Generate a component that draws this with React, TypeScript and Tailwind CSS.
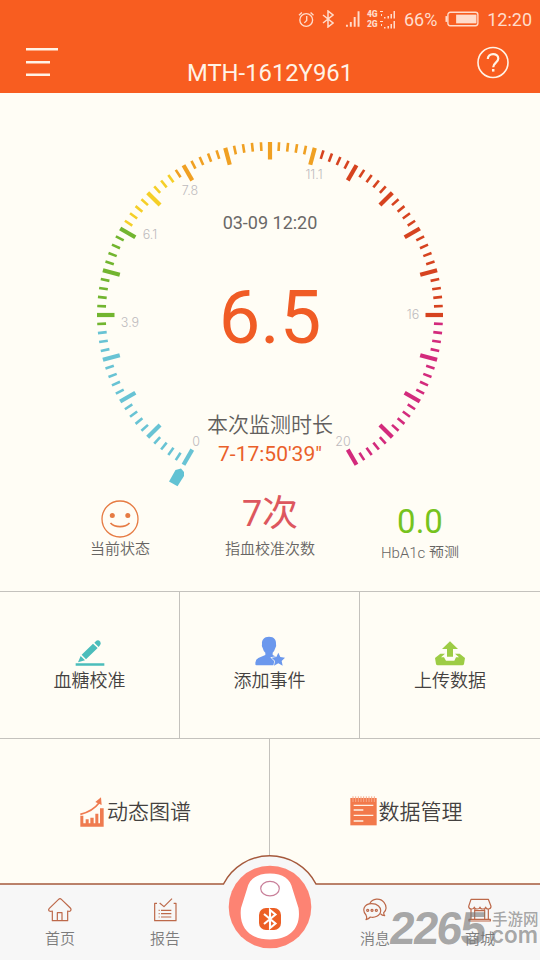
import type { ReactNode } from 'react';

const CX = 270;
const CY = 222;
const R = 173;

const SCALE_LABELS = [
  { text: '0', x: 196, y: 353 },
  { text: '3.9', x: 130, y: 234 },
  { text: '6.1', x: 150, y: 146 },
  { text: '7.8', x: 190, y: 102 },
  { text: '11.1', x: 314, y: 86 },
  { text: '16', x: 413, y: 226 },
  { text: '20', x: 343, y: 353 },
];

const tickColor = (i: number) => {
  if (i <= 18) return '#68c3d4';
  if (i <= 30) return '#72b52f';
  if (i <= 38) return '#f5cf27';
  if (i <= 55) return '#f0a022';
  if (i <= 80) return '#d6431f';
  return '#d32a7c';
};

const ticks = Array.from({ length: 101 }, (_, i) => i);

const GaugeDial = () => (
  <svg className="absolute inset-0" width="540" height="400" viewBox="0 0 540 400">
    {ticks.map(i => {
      const major = i % 5 === 0;
      return (
        <line
          key={i}
          x1={CX}
          x2={CX}
          y1={CY - R}
          y2={CY - R + (major ? 17.5 : 8.8)}
          stroke={tickColor(i)}
          strokeWidth={major ? 4.2 : 2.6}
          transform={`rotate(${210 + i * 3} ${CX} ${CY})`}
        />
      );
    })}
    {/* pointer */}
    <path d="M175.500 377L181 375.500L184 379V383L177.500 393.200L169 388.500Z" fill="#62c2d3" />
    {SCALE_LABELS.map(l => (
      <text
        key={l.text}
        x={l.x}
        y={l.y}
        textAnchor="middle"
        fontSize="12.5"
        fill="#bdbabd"
        fontFamily="Inter, Roboto, sans-serif"
        fontWeight="300"
      >
        {l.text}
      </text>
    ))}
  </svg>
);

const BluetoothGlyph = ({ width, height, stroke }: { width: number; height: number; stroke: number }) => (
  <svg width={width} height={height} viewBox="0 0 12 18" fill="none" stroke="currentColor" strokeWidth={stroke}>
    <path d="M1 5L11 13L6 17V1L11 5L1 13" />
  </svg>
);

const StatusBar = () => (
  <div className="flex h-10 items-center pl-[298px] pr-2 text-[#ffdccb]">
    <svg className="-mt-[2px]" width="17" height="17" viewBox="0 0 17 17" fill="none" stroke="currentColor" strokeWidth="1.4">
      <circle cx="8.5" cy="9" r="6.6" />
      <path d="M1 4L4 1.3M16 4L13 1.3M9 5V9.5L6.5 12" />
    </svg>
    <span className="ml-2 -mt-[3px]">
      <BluetoothGlyph width={12} height={18} stroke={1.5} />
    </span>
    <svg className="ml-[11px] -mt-[3px]" width="16" height="18" viewBox="0 0 16 18" fill="currentColor">
      <path d="M1 15h2v2h-2zM5 12h2v5h-2zM9 7h2v10h-2zM13 1h2v16h-2z" />
    </svg>
    <div className="ml-[6px] -mt-[2px] flex flex-col text-[8.5px] font-black leading-[10px]">
      {['4G', '2G'].map(net => (
        <div key={net} className="flex items-center">
          <span className="w-3">{net}</span>
          <svg width="17" height="9" viewBox="0 0 17 9" fill="currentColor">
            <path d="M1 1h3v1h-3zM2 4h1v2h-1zM5 7h1.5v1.500h-1.500zM8.500 6h1.500v2.500h-1.500zM11.500 4h1.500v4.500h-1.500zM14.500 1h1.500v7.500h-1.500z" />
          </svg>
        </div>
      ))}
    </div>
    <span className="ml-[8px] text-[18px] leading-5">66%</span>
    <svg className="ml-[8px] -mt-[3px]" width="36" height="16" viewBox="0 0 36 16">
      <rect x="3" y="1" width="31" height="14" rx="2.500" fill="none" stroke="currentColor" strokeWidth="1.4" />
      <rect x="0.500" y="5" width="2" height="6" fill="currentColor" />
      <rect x="11.500" y="3.500" width="21" height="9" fill="currentColor" />
    </svg>
    <span className="ml-[7px] text-[18px] leading-5">12:20</span>
  </div>
);

const Header = () => (
  <header className="h-[93px] bg-[#f85d20]">
    <StatusBar />
    <div className="flex h-[53px] pl-[26px] text-[#fff3e6]">
      <svg className="mt-[7px]" width="32" height="30" viewBox="0 0 32 30" stroke="currentColor" strokeWidth="2.400">
        <path d="M0 2.300H32M0 15.200H24M0 27.800H24" />
      </svg>
      <h1 className="mt-[19px] w-[419px] pl-[5px] text-center text-[23.800px] leading-[28px]">MTH-1612Y961</h1>
      <svg className="mt-[6px]" width="32" height="33" viewBox="0 0 32 33" fill="none" stroke="currentColor">
        <circle cx="16" cy="16.500" r="15" strokeWidth="1.6" />
        <path d="M10.800 13C10.800 6.500 21.300 6.500 21.300 12.600C21.300 16.500 16.200 16.800 16.200 21.200" strokeWidth="2.200" />
        <path d="M16.200 23V25.600" strokeWidth="2.500" />
      </svg>
    </div>
  </header>
);

const Gauge = () => (
  <section className="relative flex h-[498px] flex-col items-center pt-[118px]">
    <GaugeDial />
    <div className="text-[18px] leading-6 text-[#6a6867]">03-09 12:20</div>
    <div className="mt-[43px] text-[74px] leading-[80px] text-[#f05c25]">6.5</div>
    <div className="mt-[53px] text-[21px] font-[350] leading-7 text-[#625f5d]">本次监测时长</div>
    <div className="mt-px text-[21px] leading-7 text-[#ea6029]">7-17:50'39"</div>

    <div className="mt-[22px] grid w-[450px] grid-cols-3 text-[15px] font-[350] leading-[22px] text-[#676563]">
      <div className="flex flex-col items-center pt-[10px]">
        <svg width="38" height="38" viewBox="0 0 38 38" fill="none" stroke="#e67b43">
          <circle cx="19" cy="19" r="18" strokeWidth="1.300" />
          <circle cx="11.300" cy="15.500" r="2.500" fill="#e67b43" stroke="none" />
          <circle cx="26.800" cy="15.500" r="2.500" fill="#e67b43" stroke="none" />
          <path d="M9.500 23C14 27.800 24 27.800 28.500 23" strokeWidth="1.700" />
        </svg>
        <span>当前状态</span>
      </div>
      <div className="flex flex-col items-center pt-[2px]">
        <span className="mb-[2px] text-[36px] font-normal leading-[44px] text-[#dd575e]">7次</span>
        <span>指血校准次数</span>
      </div>
      <div className="flex flex-col items-center pt-3">
        <span className="text-[33px] font-normal leading-[40px] text-[#76c31e]">0.0</span>
        <span className="h-4 overflow-hidden">HbA1c 预测</span>
      </div>
    </div>
  </section>
);

const PencilIcon = () => (
  <svg width="30" height="28" viewBox="0 0 90 84" fill="#4bbdbb">
    <path d="M2 76H88V83H2ZM9 73L17 54L30 67ZM20 50L54 17L68 30L33 64ZM58 14L64 8Q70 4 76 11Q79 17 75 22L71 27Z" />
  </svg>
);

const PersonStarIcon = () => (
  <svg width="30" height="30" viewBox="0 0 90 90">
    <path
      d="M42 2C58 2 64 12 63 24Q65 30 61 36Q58 46 53 50V57L66 63L60 88H5Q0 88 1 80Q2 70 10 66L31 57V50Q25 45 23 36Q19 31 21 24C20 12 27 2 42 2Z"
      fill="#6b98ed"
    />
    <path
      d="M70 50L76 63L90 65L80 75L83 89L70 82L57 89L60 75L50 65L64 63Z"
      fill="#6b98ed"
      stroke="#fffdf5"
      strokeWidth="4"
      paintOrder="stroke"
    />
  </svg>
);

const UploadIcon = () => (
  <svg width="30" height="25" viewBox="0 0 90 75" fill="#9dcc45">
    <path d="M45 1L69 24H54V47H36V24H21Z" />
    <path d="M16 38H30L18 49H27L33 59H58L63 49H72L60 38H74L90 51L87 69Q86 73 82 73H8Q4 73 3 69L0 51Z" />
  </svg>
);

const ChartIcon = () => (
  <svg width="24" height="30" viewBox="0 0 72 90" fill="#ef7b4f">
    <path d="M1 56H10V79H17V67H26V79H31V62H41V79H46V50H55V79H60V34H71V89H1Z" />
    <path d="M1 52Q38 43 57 18" fill="none" stroke="#ef7b4f" strokeWidth="5" />
    <path d="M46 15L63 1L65 24Z" />
  </svg>
);

const NotepadIcon = () => (
  <svg width="27" height="30" viewBox="0 0 81 90">
    <path d="M1 6H80V88H1Z" fill="#f2794b" />
    <path d="M9 1V18M17 1V18M25 1V18M33 1V18M41 1V18M49 1V18M57 1V18M65 1V18M73 1V18" stroke="#f7a98a" strokeWidth="3" />
    <path d="M11 28H70M11 42H40M11 58H70M11 75H40" stroke="#fff2e6" strokeWidth="4" />
  </svg>
);

const ACTIONS: { label: string; icon: ReactNode }[] = [
  { label: '血糖校准', icon: <PencilIcon /> },
  { label: '添加事件', icon: <PersonStarIcon /> },
  { label: '上传数据', icon: <UploadIcon /> },
];

const Actions = () => (
  <section className="grid h-[147px] grid-cols-3 border-t border-[#c4c2bd]">
    {ACTIONS.map(a => (
      <button key={a.label} className="flex flex-col items-center border-r border-[#c4c2bd] pt-[43px] last:border-r-0">
        <span className="flex h-[31px] items-end">{a.icon}</span>
        <span className="mt-[2px] text-[18px] font-[350] leading-[26px] text-[#44413f]">{a.label}</span>
      </button>
    ))}
  </section>
);

const Links = () => (
  <section className="grid h-[146px] grid-cols-2 border-t border-[#c4c2bd] text-[21px] font-[350] leading-[30px] text-[#44413f]">
    <button className="flex items-start justify-center gap-[3px] border-r border-[#c4c2bd] pt-[58px] pl-[2px]">
      <ChartIcon />
      <span>动态图谱</span>
    </button>
    <button className="flex items-start justify-center gap-[2px] pt-[57px] pl-[2px]">
      <NotepadIcon />
      <span className="pt-px">数据管理</span>
    </button>
  </section>
);

const HomeIcon = () => (
  <path d="M36 2Q38 2 41 5L67 30Q71 34 67 39Q64 41 59 39V68H13V39Q8 41 4 39Q0 35 4 31L31 5Q34 2 36 2ZM28 68V44H42V68" />
);

const ReportIcon = () => (
  <path d="M12 16H5V68H69V16H62M20 15L33 26L57 2M17 37H20M24 37H55M17 47H20M24 47H55M17 57H20M24 57H55" />
);

const MessageIcon = () => (
  <>
    <path d="M20 17C28 0 52 -1 63 13C72 24 71 37 62 44Q62 49 65 53Q57 53 52 47" />
    <path d="M9 51C-4 37 3 17 26 17C44 17 54 28 53 39C52 54 34 60 22 57Q17 63 9 65Q13 59 9 51Z" />
    <path d="M14 34a3 3 0 1 0 .1 0M27 34a3 3 0 1 0 .1 0M40 34a3 3 0 1 0 .1 0" />
  </>
);

const StoreIcon = () => (
  <path d="M9 4H61L69 25Q69 33 61 33Q53 33 53 27Q52 33 44 33Q36 33 36 27Q35 33 27 33Q19 33 19 27Q18 33 10 33Q2 33 2 25ZM9 34V64M20 34V64H9M50 34V64M61 34V64H50M20 38H50M3 64H67V69H3Z" />
);

const NavItem = ({ label, children }: { label: string; children: ReactNode }) => (
  <button className="flex flex-col items-center pt-[14px]">
    <svg width="24" height="24" viewBox="0 0 72 72" fill="none" stroke="#bd694a" strokeWidth="3.600" strokeLinejoin="round">
      {children}
    </svg>
    <span className="mt-[6px] text-[15px] font-[350] leading-[22px] text-[#7c7c7c]">{label}</span>
  </button>
);

const DeviceButton = () => (
  <svg className="relative -mt-[19px] -ml-px" width="84" height="84" viewBox="0 0 84 84">
    <circle cx="42" cy="42" r="41.300" fill="#fd8373" />
    <path
      d="M42 8.500C55 8.500 62.500 14 64.500 24L70.500 43C73.500 63 62 74.500 42 74.500S10.500 63 13 43L19 24C21 14 29 8.500 42 8.500Z"
      fill="#ffffff"
    />
    <ellipse cx="42" cy="23.600" rx="9.300" ry="7.200" fill="none" stroke="#c9809a" strokeWidth="1.200" />
    <rect x="31" y="43" width="22" height="22" rx="7" fill="#ec5f25" />
    <path d="M36 49L47.500 58.500L42 63V45L47.500 49.500L36 59" fill="none" stroke="#fff" strokeWidth="2.100" />
  </svg>
);

const Watermark = () => (
  <div className="pointer-events-none absolute left-[390px] top-[26px] flex w-[150px] text-[#777777]/65">
    <span className="-skew-x-6 font-['Liberation_Sans',sans-serif] text-[46px] font-bold leading-[36px] tracking-[-2px]">
      2265
    </span>
    <span className="absolute left-[102px] top-[2px] text-[15.500px] font-medium leading-[17px]">手游网</span>
    <span className="absolute left-[101px] top-[15px] font-['Inter','Liberation_Sans',sans-serif] text-[22.500px] font-semibold leading-[20px]">
      com
    </span>
  </div>
);

const BottomNav = () => (
  <nav className="relative grid h-[76px] grid-cols-5 px-[7.5px]">
    <svg className="absolute -top-[30px] left-0" width="540" height="106" viewBox="0 0 540 106">
      <path d="M-2 30H223.500A52 52 0 0 1 316 30H542V108H-2Z" fill="#f7f7f7" stroke="#a5593c" strokeWidth="1.500" />
    </svg>
    <div className="relative flex justify-center">
      <NavItem label="首页"><HomeIcon /></NavItem>
    </div>
    <div className="relative flex justify-center">
      <NavItem label="报告"><ReportIcon /></NavItem>
    </div>
    <div className="flex justify-center">
      <DeviceButton />
    </div>
    <div className="relative flex justify-center">
      <NavItem label="消息"><MessageIcon /></NavItem>
    </div>
    <div className="relative flex justify-center">
      <NavItem label="商城"><StoreIcon /></NavItem>
    </div>
    <Watermark />
  </nav>
);

const App = () => (
  <div className="h-[960px] w-[540px] overflow-hidden bg-[#fffdf5] font-['Roboto','Noto_Sans_CJK_SC',sans-serif]">
    <Header />
    <Gauge />
    <Actions />
    <Links />
    <BottomNav />
  </div>
);

export default App;
